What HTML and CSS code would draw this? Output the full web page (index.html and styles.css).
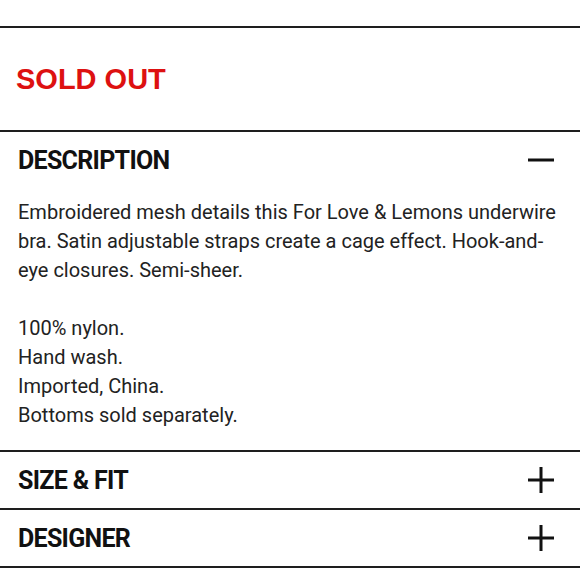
FILE: index.html
```html
<!DOCTYPE html>
<html lang="en">
<head>
<meta charset="utf-8">
<title>Product details</title>
<link rel="stylesheet" href="styles.css">
</head>
<body>
<div class="panel">
  <div class="sold">SOLD OUT</div>
  <section class="section">
    <div class="head">
      <h2 class="title">DESCRIPTION</h2>
      <svg class="icon" viewBox="0 0 26 26" width="26" height="26"><path d="M0 13H26" /></svg>
    </div>
    <div class="body">
      <p>Embroidered mesh details this For Love &amp; Lemons underwire bra. Satin adjustable straps create a cage effect. Hook-and-eye closures. Semi-sheer.</p>
      <p class="list">100% nylon.<br>Hand wash.<br>Imported, China.<br>Bottoms sold separately.</p>
    </div>
  </section>
  <section class="section">
    <div class="head">
      <h2 class="title">SIZE &amp; FIT</h2>
      <svg class="icon" viewBox="0 0 26 26" width="26" height="26"><path d="M0 13H26M13 0V26" /></svg>
    </div>
  </section>
  <section class="section last">
    <div class="head">
      <h2 class="title">DESIGNER</h2>
      <svg class="icon" viewBox="0 0 26 26" width="26" height="26"><path d="M0 13H26M13 0V26" /></svg>
    </div>
  </section>
</div>
</body>
</html>
```

FILE: styles.css
```css
html, body {
  margin: 0;
  padding: 0;
  background: #ffffff;
}

.panel {
  margin-top: 26px;
  border-top: 2px solid #1e1e1e;
}

.sold {
  height: 102px;
  display: flex;
  align-items: center;
  padding-left: 16px;
  font-family: "Liberation Sans", Arial, sans-serif;
  font-weight: bold;
  font-size: 29px;
  color: #dd1111;
}

.section {
  border-top: 2px solid #1e1e1e;
}

.section.last {
  border-bottom: 2px solid #1e1e1e;
}

.head {
  height: 56px;
  display: flex;
  align-items: center;
  justify-content: space-between;
  padding: 0 26px 0 18px;
}

.title {
  margin: 0;
  font-family: Roboto, "Noto Sans", sans-serif;
  font-weight: bold;
  font-size: 25px;
  letter-spacing: -0.7px;
  color: #111111;
}

.icon {
  display: block;
  fill: none;
  stroke: #111111;
  stroke-width: 3;
}

.body {
  padding: 10px 12px 20px 18px;
  font-family: Roboto, "Noto Sans", sans-serif;
  font-size: 20px;
  line-height: 29px;
  color: #222222;
}

.body p {
  margin: 0;
}

.body .list {
  margin-top: 29px;
}
```
